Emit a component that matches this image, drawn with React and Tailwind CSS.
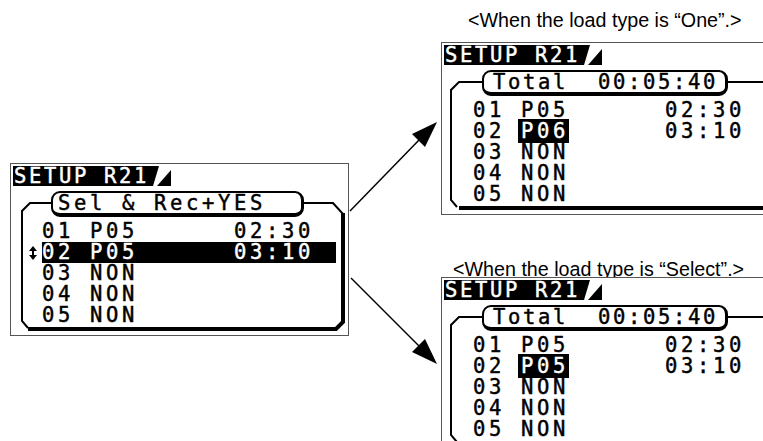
import React from "react";

const MONO =
  "font-['DejaVu_Sans_Mono',monospace] font-normal [-webkit-text-stroke:0.45px_currentColor]";

function TabEnd() {
  return (
    <svg width="26" height="20" viewBox="0 0 26 20" className="block">
      <polygon points="0,0 10,0 4,20 0,20" fill="#000" />
      <polygon points="8,20 22,4 22,20" fill="#000" />
    </svg>
  );
}

function Frame({ leftX = 12, pillLeft = 40, pillRight = 293 }) {
  return (
    <svg
      className="absolute left-[-1px] top-[-1px] pointer-events-none"
      width="339"
      height="173"
      viewBox="0 0 339 173"
    >
      <path
        d={`M${pillLeft},40 H${leftX + 8} L${leftX},48 V158 L${leftX + 6},165`}
        fill="none"
        stroke="#000"
        strokeWidth="2"
      />
      <path d="M18,166 H326 L333,159 V50" fill="none" stroke="#000" strokeWidth="4" />
      <path d={`M333,51 L323,40 H${pillRight}`} fill="none" stroke="#000" strokeWidth="2" />
    </svg>
  );
}

function UpDown() {
  return (
    <svg width="10" height="14" viewBox="0 0 10 14" className="block">
      <polygon points="5,0 9,5 1,5" fill="#000" />
      <rect x="4" y="4" width="2" height="6" fill="#000" />
      <polygon points="5,14 9,9 1,9" fill="#000" />
    </svg>
  );
}

function Row({ num, name, time, highlight, box, marker }) {
  return (
    <div className="flex h-[21px]">
      <div className="w-[14px] flex items-center justify-start">{marker ? <UpDown /> : null}</div>
      <div
        className={`${MONO} text-[20.5px] leading-[21px] tracking-[3.66px] whitespace-pre w-[294px] ${
          highlight ? "bg-black text-white" : "text-black"
        }`}
      >
        <span>{num} </span>
        <span className={box ? "bg-black text-white ml-[-3px] pl-[3px]" : ""}>{name}</span>
        {time ? <span>{"      " + time}</span> : null}
      </div>
    </div>
  );
}

function Screen({ pill, pillW, rows, leftX, pillPad, pillTrack }) {
  return (
    <div className="relative w-[339px] h-[173px] border border-[#555] bg-white shrink-0">
      <Frame leftX={leftX} pillLeft={41} pillRight={41 + pillW} />
      <div className="relative flex flex-col">
        <div className="flex ml-[2px] mt-[2px] h-[20px]">
          <div
            className={`${MONO} bg-black text-white text-[20.5px] leading-[20px] tracking-[2.66px] pl-[1px] whitespace-pre`}
          >
            SETUP R21
          </div>
          <TabEnd />
        </div>
        <div
          className={`mt-[5px] ml-[40px] h-[26px] border-t-2 border-l-2 border-b-4 border-r-[3px] border-black rounded-[9px] bg-white ${MONO} text-black text-[20.5px] leading-[20px] whitespace-pre ${pillTrack}`}
          style={{ width: pillW, paddingLeft: pillPad }}
        >
          {pill}
        </div>
        <div className="mt-[4px] ml-[17px] flex flex-col">
          {rows.map((r, i) => (
            <Row key={i} {...r} />
          ))}
        </div>
      </div>
    </div>
  );
}

function Arrows() {
  return (
    <svg
      className="absolute left-0 top-0 pointer-events-none"
      width="763"
      height="441"
      viewBox="0 0 763 441"
    >
      <line x1="350" y1="211" x2="420" y2="139" stroke="#000" strokeWidth="1.5" />
      <polygon points="437,122 425,147 412,134" fill="#000" />
      <line x1="351" y1="278" x2="420" y2="347" stroke="#000" strokeWidth="1.5" />
      <polygon points="437,364 425,339 412,352" fill="#000" />
    </svg>
  );
}

const leftRows = [
  { num: "01", name: "P05", time: "02:30" },
  { num: "02", name: "P05", time: "03:10", highlight: true, marker: true },
  { num: "03", name: "NON" },
  { num: "04", name: "NON" },
  { num: "05", name: "NON" },
];

const oneRows = [
  { num: "01", name: "P05", time: "02:30" },
  { num: "02", name: "P06", time: "03:10", box: true },
  { num: "03", name: "NON" },
  { num: "04", name: "NON" },
  { num: "05", name: "NON" },
];

const selRows = [
  { num: "01", name: "P05", time: "02:30" },
  { num: "02", name: "P05", time: "03:10", box: true },
  { num: "03", name: "NON" },
  { num: "04", name: "NON" },
  { num: "05", name: "NON" },
];

export default function App() {
  return (
    <div className="relative w-[763px] h-[441px] overflow-hidden bg-white">
      <div className="flex">
        <div className="ml-[10px] mt-[163px]">
          <Screen
            pill="Sel & Rec+YES"
            pillW={253}
            rows={leftRows}
            leftX={12}
            pillPad={5}
            pillTrack="tracking-[3.66px]"
          />
        </div>
        <div className="ml-[92px] flex flex-col w-[339px] shrink-0">
          <div className="h-[42px] pt-[10px] pl-[27px] font-['Liberation_Sans',Arial,sans-serif] text-[19.7px] leading-[20px] text-black whitespace-pre">
            {"<When the load type is \u201COne\u201D.>"}
          </div>
          <Screen
            pill="Total  00:05:40"
            pillW={246}
            rows={oneRows}
            leftX={10}
            pillPad={9}
            pillTrack="tracking-[2.66px]"
          />
          <div className="h-[62px] pt-[47px] pl-[12px] font-['Liberation_Sans',Arial,sans-serif] text-[19.7px] leading-[14px] text-black whitespace-pre">
            {"<When the load type is \u201CSelect\u201D.>"}
          </div>
          <Screen
            pill="Total  00:05:40"
            pillW={246}
            rows={selRows}
            leftX={10}
            pillPad={9}
            pillTrack="tracking-[2.66px]"
          />
        </div>
      </div>
      <Arrows />
    </div>
  );
}
